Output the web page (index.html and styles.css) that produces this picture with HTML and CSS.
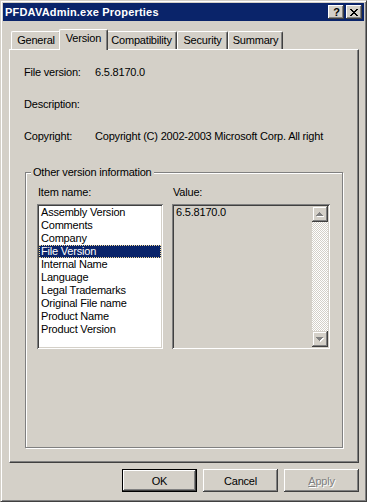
FILE: index.html
```html
<!DOCTYPE html>
<html lang="en">
<head>
    <meta charset="UTF-8">
    <title>PFDAVAdmin.exe Properties</title>
    <link rel="stylesheet" href="styles.css">
</head>
<body>
    <div class="window">
        <!-- Title bar -->
        <div class="titlebar">
            <span class="title">PFDAVAdmin.exe Properties</span>
            <div class="caption-buttons">
                <span class="cap-btn help">?</span>
                <span class="cap-btn">
                    <svg width="8" height="7" viewBox="0 0 8 7" shape-rendering="crispEdges">
                        <path d="M0 0h2v1h-2zM6 0h2v1h-2zM1 1h2v1h-2zM5 1h2v1h-2zM2 2h4v1h-4zM3 3h2v1h-2zM2 4h4v1h-4zM1 5h2v1h-2zM5 5h2v1h-2zM0 6h2v1h-2zM6 6h2v1h-2z" fill="#000"/>
                    </svg>
                </span>
            </div>
        </div>

        <!-- Tabs -->
        <div class="tabs">
            <div class="tab tab-general">General</div>
            <div class="tab tab-version active">Version</div>
            <div class="tab tab-compat">Compatibility</div>
            <div class="tab tab-security">Security</div>
            <div class="tab tab-summary">Summary</div>
        </div>

        <div class="panel">
            <div class="info">
                <span>File version:</span><span>6.5.8170.0</span>
                <span>Description:</span><span></span>
                <span>Copyright:</span><span class="nowrap">Copyright (C) 2002-2003 Microsoft Corp. All right</span>
            </div>

            <fieldset class="group">
                <legend>Other version information</legend>
                <div class="group-body">
                    <div class="col">
                        <div class="label">Item name:</div>
                        <ul class="listbox">
                            <li>Assembly Version</li>
                            <li>Comments</li>
                            <li>Company</li>
                            <li class="selected">File Version</li>
                            <li>Internal Name</li>
                            <li>Language</li>
                            <li>Legal Trademarks</li>
                            <li>Original File name</li>
                            <li>Product Name</li>
                            <li>Product Version</li>
                        </ul>
                    </div>
                    <div class="col">
                        <div class="label">Value:</div>
                        <div class="valuebox">
                            <div class="value-text">6.5.8170.0</div>
                            <div class="scrollbar">
                                <div class="sb-btn">
                                    <svg width="16" height="16" viewBox="0 0 16 16" shape-rendering="crispEdges">
                                        <path d="M8 7h1v1h-1zM7 8h3v1h-3zM6 9h5v1h-5zM5 10h7v1h-7z" fill="#fff"/>
                                        <path d="M7 6h1v1h-1zM6 7h3v1h-3zM5 8h5v1h-5zM4 9h7v1h-7z" fill="#808080"/>
                                    </svg>
                                </div>
                                <div class="sb-track"></div>
                                <div class="sb-btn">
                                    <svg width="16" height="16" viewBox="0 0 16 16" shape-rendering="crispEdges">
                                        <path d="M5 7h7v1h-7zM6 8h5v1h-5zM7 9h3v1h-3zM8 10h1v1h-1z" fill="#fff"/>
                                        <path d="M4 6h7v1h-7zM5 7h5v1h-5zM6 8h3v1h-3zM7 9h1v1h-1z" fill="#808080"/>
                                    </svg>
                                </div>
                            </div>
                        </div>
                    </div>
                </div>
            </fieldset>
        </div>

        <!-- Dialog buttons -->
        <div class="buttons">
            <div class="btn default">OK</div>
            <div class="btn">Cancel</div>
            <div class="btn disabled"><u>A</u>pply</div>
        </div>
    </div>
</body>
</html>
```

FILE: styles.css
```css
* {
    box-sizing: border-box;
}

body {
    margin: 0;
    font-family: "Liberation Sans", Arial, sans-serif;
    font-size: 11px;
    letter-spacing: -0.2px;
    color: #000;
    background: #d4d0c8;
}

.window {
    width: 367px;
    height: 502px;
    padding: 2px;
    background: #d4d0c8;
    border: 1px solid;
    border-color: #d4d0c8 #404040 #404040 #d4d0c8;
    box-shadow: inset 1px 1px #fff, inset -1px -1px #808080;
}

/* title bar */

.titlebar {
    height: 18px;
    background: #0a246a;
    display: flex;
    align-items: center;
    justify-content: space-between;
    padding-left: 2px;
}

.title {
    color: #fff;
    font-weight: bold;
    font-size: 11px;
    letter-spacing: 0.2px;
}

.caption-buttons {
    display: flex;
    gap: 2px;
    margin-right: 2px;
}

.cap-btn {
    width: 16px;
    height: 14px;
    background: #d4d0c8;
    display: flex;
    align-items: center;
    justify-content: center;
    box-shadow:
        inset -1px -1px #404040,
        inset 1px 1px #fff,
        inset -2px -2px #808080;
}

.cap-btn.help {
    font-weight: bold;
    font-size: 11px;
    line-height: 14px;
    padding-left: 1px;
}

/* tabs */

.tabs {
    display: flex;
    align-items: flex-end;
    height: 20px;
    margin: 8px 0 0 8px;
}

.tab {
    height: 18px;
    line-height: 17px;
    text-align: center;
    background: #d4d0c8;
    border-top: 1px solid #fff;
    border-left: 1px solid #fff;
    border-right: 1px solid #404040;
    box-shadow: inset -1px 0 #808080;
    border-radius: 2px 2px 0 0;
    white-space: nowrap;
}

.tab-general { width: 50px; }
.tab-compat { width: 71px; }
.tab-security { width: 51px; }
.tab-summary { width: 55px; }

.tab.active {
    width: 49px;
    height: 21px;
    line-height: 17px;
    margin: 0 -2px -1px -2px;
    position: relative;
    z-index: 1;
}

/* page panel */

.panel {
    width: 350px;
    height: 414px;
    margin-left: 6px;
    padding: 16px 15px 0 15px;
    border: 1px solid;
    border-color: #fff #404040 #404040 #fff;
    box-shadow: inset -1px -1px #808080;
}

.info {
    display: grid;
    grid-template-columns: 71px 1fr;
    grid-auto-rows: 13px;
    row-gap: 19px;
    line-height: 13px;
    margin-left: -1px;
}

.nowrap {
    white-space: nowrap;
}

.group {
    margin: 23px 0 0 0;
    padding: 0;
    min-inline-size: 0;
    border: 1px solid #808080;
    box-shadow: inset 1px 1px #fff, 1px 1px #fff;
}

.group legend {
    margin-left: 5px;
    padding: 0 2px;
    line-height: 13px;
    background: #d4d0c8;
}

.group-body {
    display: grid;
    grid-template-columns: 126px 158px;
    column-gap: 9px;
    padding: 7px 10px 98px 11px;
}

.label {
    line-height: 13px;
    margin-bottom: 5px;
    padding-left: 1px;
}

.listbox {
    list-style: none;
    margin: 0;
    height: 145px;
    padding: 2px;
    background: #fff;
    box-shadow:
        inset 1px 1px #808080,
        inset -1px -1px #fff,
        inset 2px 2px #404040,
        inset -2px -2px #d4d0c8;
}

.listbox li {
    line-height: 13px;
    height: 13px;
    padding-left: 2px;
    white-space: nowrap;
}

.listbox li.selected {
    background: #0a246a;
    color: #fff;
    outline: 1px dotted #f5db95;
    outline-offset: -1px;
}

.valuebox {
    display: flex;
    height: 145px;
    padding: 2px;
    background: #d4d0c8;
    box-shadow:
        inset 1px 1px #808080,
        inset -1px -1px #fff,
        inset 2px 2px #404040,
        inset -2px -2px #d4d0c8;
}

.value-text {
    flex: 1;
    line-height: 13px;
    padding-left: 2px;
}

.scrollbar {
    width: 16px;
    display: flex;
    flex-direction: column;
}

.sb-btn {
    width: 16px;
    height: 16px;
    background: #d4d0c8;
    box-shadow:
        inset -1px -1px #404040,
        inset 1px 1px #d4d0c8,
        inset -2px -2px #808080,
        inset 2px 2px #fff;
}

.sb-btn svg {
    display: block;
}

.sb-track {
    flex: 1;
    background: repeating-conic-gradient(#fff 0 25%, #d4d0c8 0 50%) 0 0 / 2px 2px;
}

/* dialog buttons */

.buttons {
    display: flex;
    justify-content: flex-end;
    gap: 6px;
    margin-top: 6px;
    padding-right: 5px;
}

.btn {
    width: 75px;
    height: 23px;
    display: flex;
    align-items: center;
    justify-content: center;
    background: #d4d0c8;
    box-shadow:
        inset -1px -1px #404040,
        inset 1px 1px #fff,
        inset -2px -2px #808080;
}

.btn.default {
    border: 1px solid #000;
}

.btn.disabled {
    color: #808080;
    text-shadow: 1px 1px #fff;
}
```
